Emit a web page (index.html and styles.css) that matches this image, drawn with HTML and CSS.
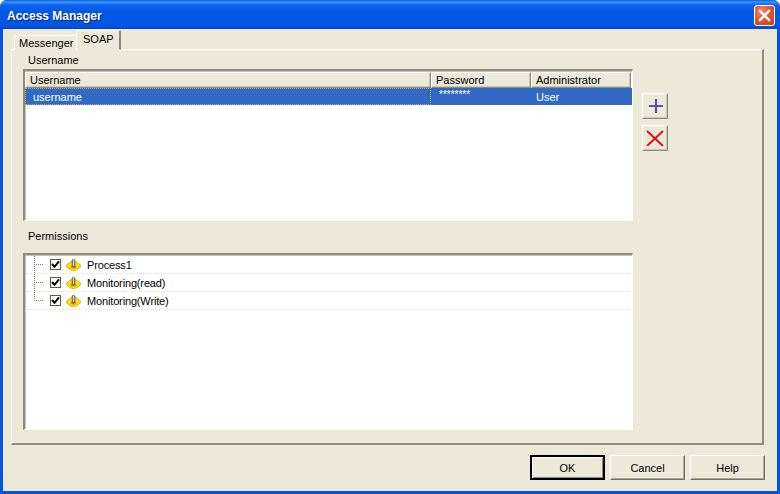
FILE: index.html
```html
<!DOCTYPE html>
<html lang="en">
<head>
<meta charset="utf-8">
<title>Access Manager</title>
<link rel="stylesheet" href="styles.css">
</head>
<body>
<div class="window">
  <header class="titlebar">
    <span class="title">Access Manager</span>
    <button class="close" aria-label="Close">
      <svg width="13" height="13" viewBox="0 0 13 13"><path d="M2 2 L11 11 M11 2 L2 11" stroke="#fff" stroke-width="2.4" stroke-linecap="square" fill="none"/></svg>
    </button>
  </header>
  <div class="client">
    <div class="tabs">
      <div class="tab">Messenger</div>
      <div class="tab tab-active">SOAP</div>
    </div>
    <section class="panel">
      <div class="main">
        <div class="group-label">Username</div>
        <div class="box box-users">
          <div class="head">
            <div class="hcell hcell-name">Username</div>
            <div class="hcell hcell-col">Password</div>
            <div class="hcell hcell-col">Administrator</div>
          </div>
          <div class="row-selected">
            <div class="cell cell-name">username</div>
            <div class="cell cell-pass">********</div>
            <div class="cell cell-admin">User</div>
          </div>
        </div>
        <div class="group-label group-label-perm">Permissions</div>
        <div class="box box-perm">
          <div class="tree-row">
            <span class="twig"></span>
            <span class="check"><svg width="9" height="9" viewBox="0 0 9 9"><path d="M1 4 L3.5 6.8 L8 1.4" stroke="#000" stroke-width="2" fill="none"/></svg></span>
            <svg class="gear" width="15" height="15" viewBox="0 0 15 15"><path d="M0.5 9 Q0.5 7 2.5 6.5 Q3.5 4.5 7.5 4.5 Q11.5 4.5 12.5 6.5 Q14.5 7 14.5 9 Q14.5 10.5 13 11 Q11 13.5 7.5 13.5 Q4 13.5 2 11 Q0.5 10.5 0.5 9Z" fill="#ffe000" stroke="#d0a400" stroke-width=".8"/><ellipse cx="7.5" cy="10.2" rx="3" ry="1.4" fill="#c49a00"/><rect x="5.7" y="2" width="3.6" height="8.2" rx="1.5" fill="#66666e"/><rect x="6.9" y="2.6" width="1.2" height="6.4" fill="#dcdce2"/></svg>
            <span class="tree-text">Process1</span>
          </div>
          <div class="tree-row">
            <span class="twig"></span>
            <span class="check"><svg width="9" height="9" viewBox="0 0 9 9"><path d="M1 4 L3.5 6.8 L8 1.4" stroke="#000" stroke-width="2" fill="none"/></svg></span>
            <svg class="gear" width="15" height="15" viewBox="0 0 15 15"><path d="M0.5 9 Q0.5 7 2.5 6.5 Q3.5 4.5 7.5 4.5 Q11.5 4.5 12.5 6.5 Q14.5 7 14.5 9 Q14.5 10.5 13 11 Q11 13.5 7.5 13.5 Q4 13.5 2 11 Q0.5 10.5 0.5 9Z" fill="#ffe000" stroke="#d0a400" stroke-width=".8"/><ellipse cx="7.5" cy="10.2" rx="3" ry="1.4" fill="#c49a00"/><rect x="5.7" y="2" width="3.6" height="8.2" rx="1.5" fill="#66666e"/><rect x="6.9" y="2.6" width="1.2" height="6.4" fill="#dcdce2"/></svg>
            <span class="tree-text">Monitoring(read)</span>
          </div>
          <div class="tree-row">
            <span class="twig twig-last"></span>
            <span class="check"><svg width="9" height="9" viewBox="0 0 9 9"><path d="M1 4 L3.5 6.8 L8 1.4" stroke="#000" stroke-width="2" fill="none"/></svg></span>
            <svg class="gear" width="15" height="15" viewBox="0 0 15 15"><path d="M0.5 9 Q0.5 7 2.5 6.5 Q3.5 4.5 7.5 4.5 Q11.5 4.5 12.5 6.5 Q14.5 7 14.5 9 Q14.5 10.5 13 11 Q11 13.5 7.5 13.5 Q4 13.5 2 11 Q0.5 10.5 0.5 9Z" fill="#ffe000" stroke="#d0a400" stroke-width=".8"/><ellipse cx="7.5" cy="10.2" rx="3" ry="1.4" fill="#c49a00"/><rect x="5.7" y="2" width="3.6" height="8.2" rx="1.5" fill="#66666e"/><rect x="6.9" y="2.6" width="1.2" height="6.4" fill="#dcdce2"/></svg>
            <span class="tree-text">Monitoring(Write)</span>
          </div>
        </div>
      </div>
      <div class="side">
        <button class="btn-icon" aria-label="Add">
          <svg width="16" height="16" viewBox="0 0 16 16" overflow="visible"><path d="M9 1 V15 M2 8 H16" stroke="#5055a8" stroke-width="2.2" fill="none"/></svg>
        </button>
        <button class="btn-icon" aria-label="Delete">
          <svg width="18" height="16" viewBox="0 0 18 16"><path d="M1 1 L17 16 M17 1 L1 16" stroke="#e4120c" stroke-width="2" fill="none"/></svg>
        </button>
      </div>
    </section>
    <footer class="footer">
      <button class="btn btn-default">OK</button>
      <button class="btn">Cancel</button>
      <button class="btn">Help</button>
    </footer>
  </div>
</div>
</body>
</html>
```
FILE: styles.css
```css
* { box-sizing: border-box; }
html, body { margin: 0; padding: 0; }
body { width: 780px; height: 494px; overflow: hidden; font-family: "Liberation Sans", sans-serif; font-size: 11px; color: #000; }

.window {
  width: 780px; height: 494px;
  display: flex; flex-direction: column;
  border-radius: 7px 7px 0 0;
  padding: 0 3px 3px 3px;
  background-color: #0553e6;
}
.titlebar {
  height: 29px; margin: 0 -3px;
  padding: 0 5px 0 7px;
  display: flex; align-items: center; justify-content: space-between;
  border-radius: 7px 7px 0 0;
  background: linear-gradient(to bottom, #0a5cd8 0, #3d95ff 2px, #0a64ee 5px, #0358e4 12px, #0358e6 22px, #0654e0 26px, #0346c8 29px);
}
.title { font-weight: bold; font-size: 12px; color: #fff; text-shadow: 1px 1px 1px #0a1f6e; padding-top: 2px; }
.close {
  width: 21px; height: 21px; padding: 0; margin-top: 1px;
  border: 1px solid #fff; border-radius: 3px;
  background: radial-gradient(circle at 35% 30%, #ec8a6a, #dc5230 55%, #c03a10);
  display: flex; align-items: center; justify-content: center;
}

.client { flex: 1; background: #ece9d8; display: flex; flex-direction: column; padding: 0 12px 0 8px; border-right: 1px solid #ece9d8; }

.tabs { display: flex; align-items: flex-end; height: 21px; padding: 0 0 0 3px; margin-bottom: -1px; position: relative; z-index: 1; }
.tab {
  height: 15px; padding: 0 4px;
  line-height: 15px;
  width: 62px;
  border: 1px solid #fff; border-bottom: none; border-right: none;
  border-radius: 2px 2px 0 0;
  background: #ece9d8;
}
.tab-active {
  height: 20px; width: 45px;
  line-height: 16px; padding: 0 6px;
  border-right: 2px solid #8e8b7c;
  border-bottom: 1px solid #ece9d8;
}

.panel {
  height: 396px;
  display: flex;
  border: 1px solid #fff;
  border-right: 2px solid #8e8b7c;
  border-bottom: 2px solid #8e8b7c;
  padding: 0 0 0 11px;
  background: #ece9d8;
}
.main { width: 610px; display: flex; flex-direction: column; }
.group-label { height: 19px; padding: 3px 0 0 5px; line-height: 14px; }
.group-label-perm { height: 32px; padding-top: 8px; }

.box {
  background: #fff;
  border-style: solid; border-width: 2px 1px 1px 2px;
  border-color: #8f8c7e #fff #fff #8f8c7e;
  box-shadow: inset 1px 1px 0 #c8c5b6;
}
.box-users { height: 152px; padding: 1px 0 0 0; }
.box-perm { height: 177px; padding: 1px 0 0 1px; }

.head { display: flex; height: 16px; }
.hcell {
  height: 16px; line-height: 14px; padding-left: 4px;
  background: #ece9d8;
  border: 1px solid; border-color: #fff #8e8b7c #8e8b7c #fff;
  box-shadow: inset -1px -1px 0 #c8c5b6;
}
.hcell-name { width: 406px; }
.hcell-col { width: 100px; }

.row-selected { display: flex; height: 17px; background: #316ac5; color: #fff; line-height: 17px; }
.cell { height: 17px; }
.cell-name { width: 406px; padding-left: 7px; border: 1px dotted #d9a35c; }
.cell-pass { width: 100px; padding-left: 8px; font-size: 10px; line-height: 14px; }
.cell-admin { width: 100px; padding-left: 5px; line-height: 18px; }

.tree-row {
  display: flex; align-items: center; height: 18px;
  border-bottom: 1px dotted #e6e3d4;
}
.twig {
  width: 10px; height: 18px; margin-left: 8px; margin-right: 6px; flex: none; align-self: flex-start;
  background:
    repeating-linear-gradient(to bottom, #85857a 0 1px, transparent 1px 2px) left top / 1px 100% no-repeat,
    repeating-linear-gradient(to right, #85857a 0 1px, transparent 1px 2px) left 8px / 100% 1px no-repeat;
}
.twig-last {
  background:
    repeating-linear-gradient(to bottom, #85857a 0 1px, transparent 1px 2px) left top / 1px 9px no-repeat,
    repeating-linear-gradient(to right, #85857a 0 1px, transparent 1px 2px) left 8px / 100% 1px no-repeat;
}
.check {
  width: 11px; height: 11px; flex: none;
  display: flex; align-items: center; justify-content: center;
  border: 1px solid #5a5a52;
  background: #fff;
}
.gear { margin-left: 5px; flex: none; }
.tree-text { margin-left: 6px; line-height: 14px; letter-spacing: -0.15px; }

.side { display: flex; flex-direction: column; gap: 6px; padding: 43px 0 0 9px; }
.btn-icon {
  width: 26px; height: 26px; padding: 0;
  background: #ece9d8;
  border: 1px solid; border-color: #fff #8e8b7c #8e8b7c #fff;
  box-shadow: inset -1px -1px 0 #c8c5b6;
  display: flex; align-items: center; justify-content: center;
}

.footer { display: flex; justify-content: flex-end; gap: 5px; padding-top: 10px; margin-right: -1px; }
.btn {
  width: 75px; height: 25px; padding: 0;
  font: inherit; color: #000;
  background: #ece9d8;
  border: 1px solid; border-color: #fff #716f64 #716f64 #fff;
  box-shadow: inset -1px -1px 0 #aca899;
}
.btn-default {
  border: 2px solid #000;
  box-shadow: inset 1px 1px 0 #fff, inset -1px -1px 0 #8e8b7c;
}
```
